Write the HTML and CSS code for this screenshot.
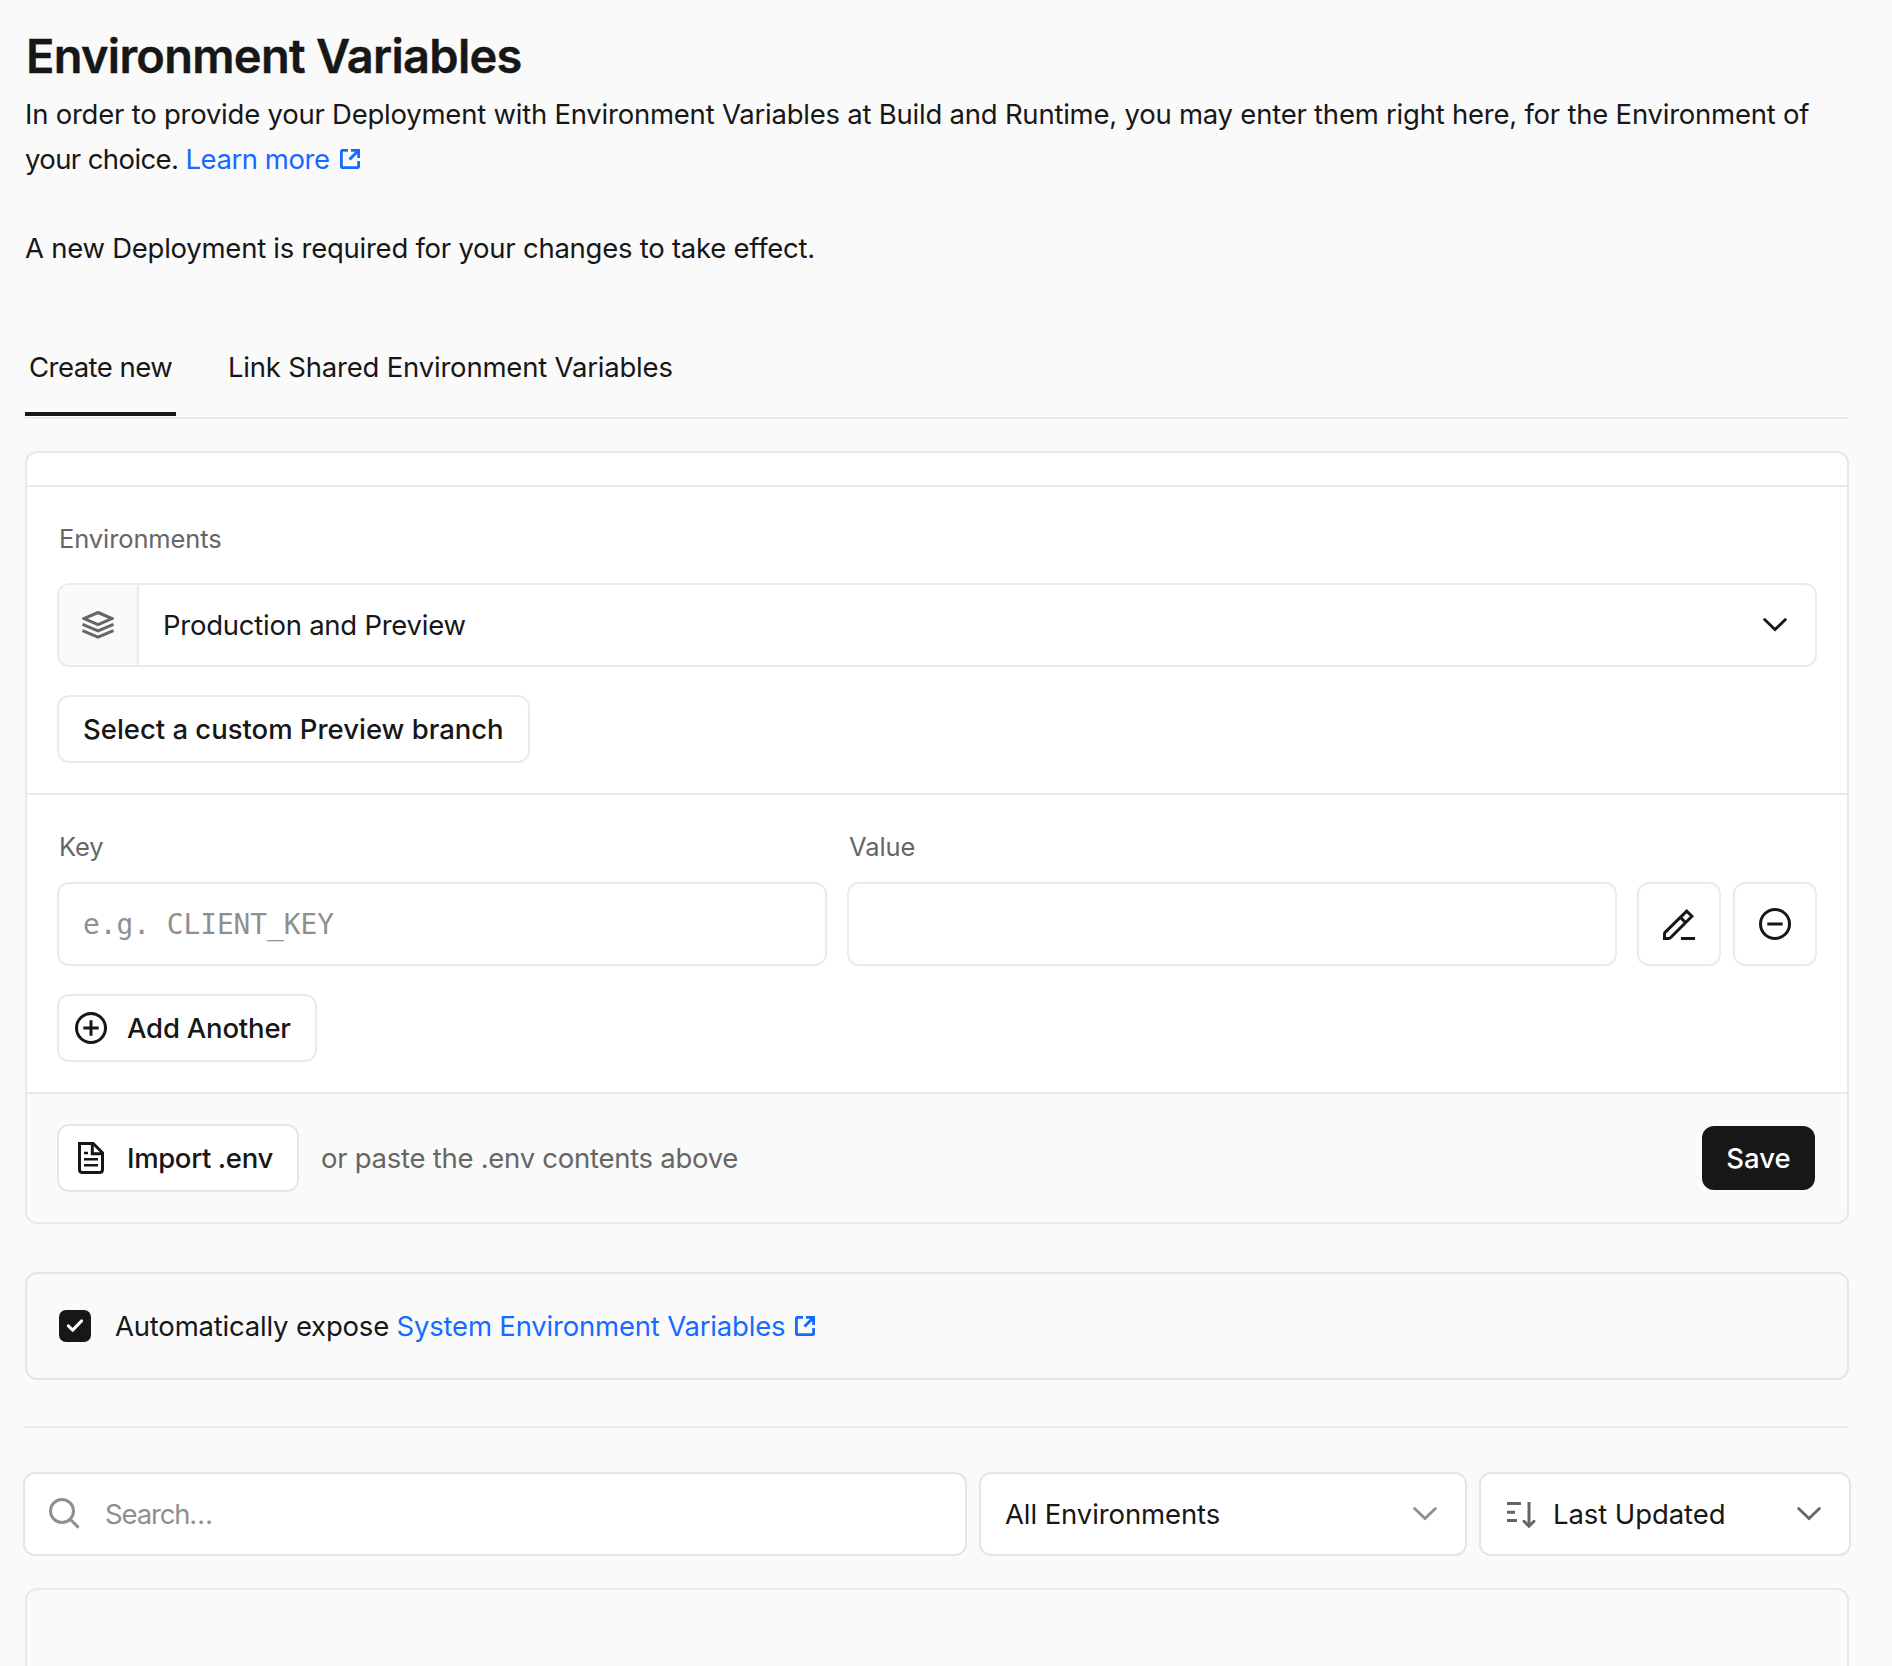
FILE: index.html
```
<!DOCTYPE html>
<html lang="en">
<head>
<meta charset="utf-8">
<title>Environment Variables</title>
<link rel="stylesheet" href="styles.css">
</head>
<body>
<svg class="sprite" aria-hidden="true">
  <symbol id="external" viewBox="0 0 20 20"><path d="M8 1.3H3.2Q1.3 1.3 1.3 3.2V16.8Q1.3 18.7 3.2 18.7H16.8Q18.7 18.7 18.7 16.8V12M11 1.3H18.7V9M18 2L9.5 10.5"/></symbol>
  <symbol id="chevron" viewBox="0 0 24 14"><path d="M1.6 1.6L12 11.6L22.4 1.6" stroke-linecap="round"/></symbol>
</svg>
<main class="page">
  <h1 class="title">Environment Variables</h1>
  <div class="intro">
    <p>In order to provide your Deployment with Environment Variables at Build and Runtime, you may enter them right here, for the Environment of <br><span class="choice">your choice. </span><a class="link learn" href="#">Learn more<svg class="ext"><use href="#external"/></svg></a></p>
    <p class="note">A new Deployment is required for your changes to take effect.</p>
  </div>

  <nav class="tabs">
    <a class="tab active" href="#">Create new</a>
    <a class="tab shared" href="#">Link Shared Environment Variables</a>
  </nav>

  <section class="card form">
    <div class="strip"></div>
    <div class="section">
      <div class="label">Environments</div>
      <div class="select">
        <span class="prefix"><svg class="layers" viewBox="0 0 32 28"><path d="M16 1.5L30 7.6L16 13.7L2 7.6Z"/><path d="M.5 13.3L16 19.9L31.5 13.3M.5 19.6L16 26.2L31.5 19.6"/></svg></span>
        <span class="select-text production">Production and Preview</span>
        <svg class="chevron"><use href="#chevron"/></svg>
      </div>
      <button class="button branch">Select a custom Preview branch</button>
    </div>
    <div class="section">
      <div class="fields">
        <div class="label">Key</div><div class="label">Value</div><i></i><i></i>
        <div class="input">e.g. CLIENT_KEY</div>
        <div class="input"></div>
        <button class="square" aria-label="Edit"><svg class="icon" viewBox="0 0 32 32"><path d="M1.5 30.5V26Q1.5 24.9 2.3 24.1L23.7 3.1L28.9 8.3L7.7 29.5Q6.7 30.5 5.6 30.5ZM17.3 9.2L23.2 15.1M18 30.5H32"/></svg></button>
        <button class="square" aria-label="Remove"><svg class="icon" viewBox="0 0 32 32"><circle cx="16" cy="16" r="14.5"/><path d="M8.3 16H23.7"/></svg></button>
      </div>
      <button class="button with-icon add"><svg class="icon" viewBox="0 0 32 32"><circle cx="16" cy="16" r="14.5"/><path d="M8.3 16H23.7M16 8.3V23.7"/></svg>Add Another</button>
    </div>
    <div class="footer">
      <button class="button with-icon import"><svg class="icon" viewBox="0 0 32 32"><path d="M4.5 1.5H18.2L27.5 10.8V27.5Q27.5 30.5 24.5 30.5H7.5Q4.5 30.5 4.5 27.5Z"/><path d="M17.3 1.5V11.8H27.5"/><path d="M9 11H13M9 17.3H23M9 23.2H23" stroke-width="2.4"/></svg>Import .env</button>
      <span class="hint">or paste the .env contents above</span>
      <button class="save">Save</button>
    </div>
  </section>

  <section class="card expose">
    <span class="checkbox"><svg class="icon" viewBox="0 0 32 32"><path d="M9.3 15.9L13.7 20.1L22.6 10.9" stroke-linecap="round" stroke-linejoin="round"/></svg></span>
    <span class="expose-text">Automatically expose </span><a class="link system" href="#">System Environment Variables<svg class="ext"><use href="#external"/></svg></a>
  </section>

  <hr class="rule">

  <div class="filters">
    <div class="filter search">
      <svg class="icon" viewBox="0 0 32 32"><circle cx="14" cy="14" r="11.5"/><path d="M22.2 22.2L30.6 30.6"/></svg>
      <span>Search…</span>
    </div>
    <div class="filter environments"><span>All Environments</span><svg class="chevron"><use href="#chevron"/></svg></div>
    <div class="filter sort">
      <svg class="sort-icon" viewBox="0 0 29 27"><path d="M0 1.5H14M0 10.2H8M0 18.5H10M22 0V24"/><path d="M17 19.3L22 24.2L27 19.3" stroke-linecap="round"/></svg>
      <span>Last Updated</span><svg class="chevron"><use href="#chevron"/></svg>
    </div>
  </div>

  <section class="card list"></section>
</main>
</body>
</html>
```
FILE: styles.css
```
* { box-sizing: border-box; }

html, body { height: 100%; overflow: hidden; }

body {
  margin: 0;
  background: #fafafa;
  color: #171717;
  font: 400 27.5px/44.8px Inter, sans-serif;
}

p { margin: 0; }
button { font: inherit; color: inherit; cursor: pointer; }
svg { fill: none; stroke: currentColor; stroke-width: 3; flex: none; }

.sprite { display: none; }
.page { width: 1849px; padding: 24px 0 0 25px; }

.title {
  margin: 0 0 4px;
  padding-left: 1px;
  font-size: 47px;
  font-weight: 600;
  line-height: 64px;
  letter-spacing: -0.72px;
  -webkit-text-stroke: 0.4px currentColor;
}

.intro { height: 179px; letter-spacing: -0.23px; white-space: nowrap; }
.choice { letter-spacing: -0.6px; }
.note { margin-top: 44.8px; letter-spacing: -0.25px; }

.link { color: #176aff; text-decoration: none; }
.learn { letter-spacing: -0.45px; }
.ext { width: 20px; height: 20px; margin-left: 10px; stroke-width: 3; vertical-align: baseline; }

.tabs {
  display: flex;
  gap: 48px;
  margin-top: 73px;
  border-bottom: 2px solid #eaeaea;
}
.tab {
  height: 72px;
  margin-bottom: 1px;
  padding: 0 4px;
  border-bottom: 4px solid transparent;
  color: inherit;
  line-height: 46px;
  text-decoration: none;
  white-space: nowrap;
}
.active { width: 151px; border-color: #171717; letter-spacing: -0.53px; }
.shared { letter-spacing: -0.2px; }

.card { border: 2px solid #e8e8e8; border-radius: 12px; }

.form { margin-top: 32px; overflow: hidden; background: #fff; }
.strip { height: 32px; }
.section { padding: 37px 30px 30px; border-top: 2px solid #eaeaea; }

.label { padding-left: 2px; color: #666; font-size: 25.5px; line-height: 30px; letter-spacing: -0.1px; }

.select {
  display: flex;
  align-items: center;
  height: 84px;
  margin: 29px 0 28px;
  padding-right: 28px;
  border: 2px solid #ebebeb;
  border-radius: 12px;
}
.prefix {
  display: flex;
  align-items: center;
  justify-content: center;
  align-self: stretch;
  width: 80px;
  border-right: 2px solid #ebebeb;
  border-radius: 10px 0 0 10px;
  background: #fafafa;
  color: #666;
}
.layers { width: 32px; height: 28px; stroke-width: 3; }
.select-text { flex: 1; padding-left: 24px; }
.production { letter-spacing: -0.25px; }
.chevron { width: 24px; height: 14px; stroke-width: 2.8; }

.button {
  display: flex;
  align-items: center;
  height: 68px;
  padding: 0 0 0 24px;
  border: 2px solid #ebebeb;
  border-radius: 12px;
  background: #fff;
  font-weight: 500;
  white-space: nowrap;
}
.branch { width: 473px; letter-spacing: -0.02px; }
.with-icon { gap: 20px; padding-left: 16px; }
.icon { width: 32px; height: 32px; }

.fields {
  display: grid;
  grid-template-columns: 770px 770px 84px 84px;
  column-gap: 20px;
  row-gap: 20px;
  margin-bottom: 28px;
}
.square:last-child { margin-left: -8px; }
.input {
  height: 84px;
  padding: 1px 0 0 24px;
  border: 2px solid #ebebeb;
  border-radius: 12px;
  color: #8f8f8f;
  font: 27.8px/80px "DejaVu Sans Mono", monospace;
}
.square {
  display: flex;
  align-items: center;
  justify-content: center;
  width: 84px;
  height: 84px;
  padding: 0;
  border: 2px solid #ebebeb;
  border-radius: 12px;
  background: #fff;
}
.add { width: 260px; letter-spacing: -0.2px; }

.footer {
  display: flex;
  align-items: center;
  padding: 30px 32px 30px 30px;
  border-top: 2px solid #eaeaea;
  background: #fafafa;
}
.import { width: 242px; border-color: #e6e6e6; letter-spacing: -0.35px; }
.hint { margin-left: 22px; color: #666; letter-spacing: -0.27px; }
.save {
  width: 113px;
  height: 64px;
  margin-left: auto;
  padding: 0;
  border: 0;
  border-radius: 12px;
  background: #171717;
  color: #fff;
  font-weight: 500;
}

.expose {
  display: flex;
  align-items: center;
  height: 108px;
  margin-top: 48px;
  padding-left: 32px;
  border-color: #e6e6e6;
}
.checkbox { display: flex; margin-right: 24px; border-radius: 7px; background: #171717; color: #fff; }
.expose-text { white-space: pre; letter-spacing: -0.2px; }
.system { letter-spacing: -0.2px; }

.rule { height: 2px; margin: 46px 0 44px; border: 0; background: #eaeaea; }

.filters { display: grid; grid-template-columns: 944px 488px 372px; gap: 12px; margin-left: -2px; }
.filter {
  display: flex;
  align-items: center;
  height: 84px;
  border: 2px solid #e5e5e5;
  border-radius: 12px;
  background: #fff;
}
.search { gap: 25px; padding-left: 23px; color: #8f8f8f; letter-spacing: -1.15px; }
.search .icon { margin-top: -2px; }
.environments { justify-content: space-between; padding: 0 28px 0 24px; letter-spacing: -0.1px; }
.environments .chevron { color: #8f8f8f; }
.sort { padding: 0 28px 0 26px; }
.sort span { flex: 1; padding-left: 17px; letter-spacing: -0.08px; }
.sort svg { color: #666; }
.sort-icon { width: 29px; height: 27px; margin-top: 2px; }

.list { height: 120px; margin-top: 32px; }
```
